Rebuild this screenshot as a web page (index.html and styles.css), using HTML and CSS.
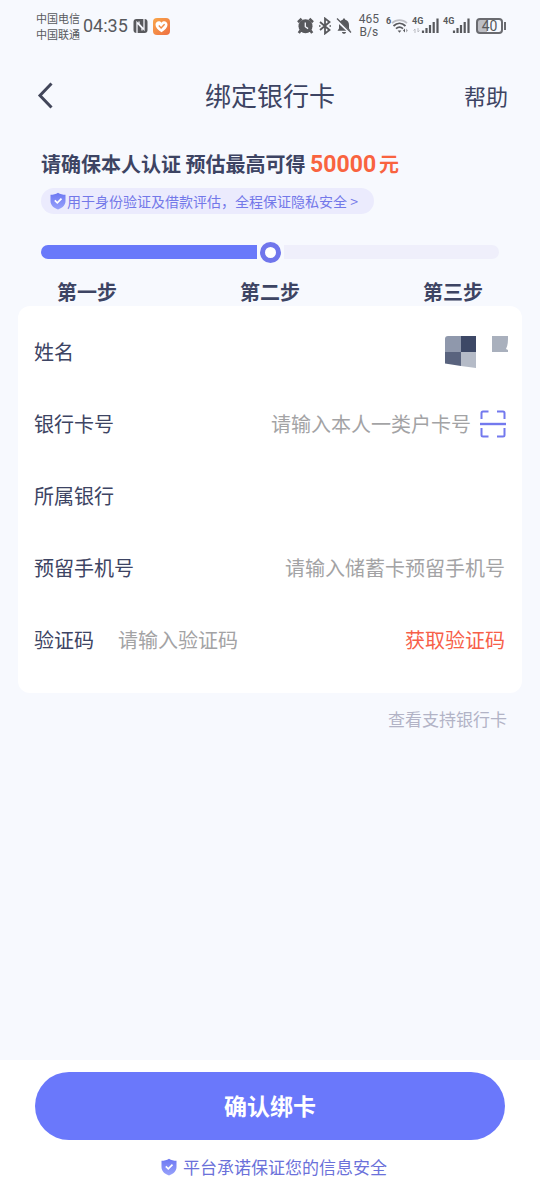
FILE: index.html
```html
<!DOCTYPE html>
<html lang="zh-CN">
<head>
<meta charset="utf-8">
<meta name="viewport" content="width=device-width, initial-scale=1">
<title>绑定银行卡</title>
<link rel="stylesheet" href="styles.css">
</head>
<body>
<div class="page">
  <div class="status">
    <div class="status-left">
      <div class="carriers"><span>中国电信</span><span>中国联通</span></div>
      <span class="clock">04:35</span>
      <svg class="nfc" width="15" height="16" viewBox="0 0 15 16" aria-hidden="true">
        <rect x="0.500" y="1" width="14" height="14" rx="3" fill="#58595d"/>
        <path d="M4 15V4.500L9 10v2.500M11 1v10.500L6 6V3.500" fill="none" stroke="#f7f8fe" stroke-width="1.300"/>
      </svg>
      <svg width="17" height="17" viewBox="0 0 17 17" aria-hidden="true">
        <defs><linearGradient id="heart" x1="0" y1="0" x2="1" y2="1"><stop stop-color="#f9a64a"/><stop offset="1" stop-color="#ee6f42"/></linearGradient></defs>
        <rect width="17" height="17" rx="4" fill="url(#heart)"/>
        <path d="M8.500 14.200C5 12 2.500 9.600 2.500 6.800 2.500 3.300 6.500 2.200 8.500 4.700c2-2.500 6-1.400 6 2.100 0 2.800-2.500 5.200-6 7.400z" fill="#fff"/>
        <path d="M5.800 7.600l2.300 2.300 3.500-3.700" fill="none" stroke="#f28b45" stroke-width="1.400"/>
      </svg>
    </div>
    <div class="status-right">
      <svg width="17" height="18" viewBox="0 0 17 18" aria-hidden="true">
        <circle cx="8.500" cy="9.300" r="7" fill="#58595d"/>
        <path d="M1 5.200L4.600 1.800M16 5.200L12.400 1.800M3.500 13.500L1.800 16M13.500 13.500l1.700 2.500" stroke="#58595d" stroke-width="2.600"/>
        <path d="M8.300 5.500v4.200l2.800 1.900" fill="none" stroke="#f7f8fe" stroke-width="1.300"/>
      </svg>
      <svg width="14" height="18" viewBox="0 0 14 18" aria-hidden="true">
        <path d="M2 5l9.500 8L7 16.500v-15L11.500 5 2 13" fill="none" stroke="#58595d" stroke-width="1.800"/>
        <path d="M1 9h1.500M11.500 9H13" stroke="#58595d" stroke-width="1.500"/>
      </svg>
      <svg width="16" height="18" viewBox="0 0 16 18" aria-hidden="true">
        <path d="M8 1.500c.8 0 1.200.5 1.200 1.200C12 3.400 13 5.500 13 8v3.500l1.500 2.300H1.500L3 11.500V8c0-2.500 1-4.600 3.800-5.300C6.800 2 7.200 1.500 8 1.500zM6 15h4c0 1-.8 1.800-2 1.800S6 16 6 15z" fill="#58595d"/>
        <path d="M0 2.500l15 14" stroke="#f7f8fe" stroke-width="2.600"/>
        <path d="M1 1.500l14 14" stroke="#58595d" stroke-width="1.300"/>
      </svg>
      <div class="speed"><span>465</span><span>B/s</span></div>
      <div class="signal"><span class="tag">6</span>
        <svg width="17" height="18" viewBox="0 0 17 18" aria-hidden="true">
          <path d="M1 6.200c4.300-4 10.700-4 15 0" fill="none" stroke="#bfc0c6" stroke-width="1.700"/>
          <path d="M2.500 9c3.600-3.400 8.400-3.400 12 0M5 11.700c2.200-2 4.800-2 7 0" fill="none" stroke="#58595d" stroke-width="1.800"/>
          <path d="M6.600 13.500h3.800l-1.900 2.200zM14 11.500v4l-2-2z" fill="#58595d"/>
          <path d="M15 11.500v4l2-2z" fill="#aaabb0"/>
        </svg>
      </div>
      <div class="signal"><span class="tag">4G</span>
        <svg width="18" height="18" viewBox="0 0 18 18" aria-hidden="true">
          <path d="M2 13.500V16M5.500 11v5M9 8v8M12.700 5v11M16.500 1.500V16" stroke="#58595d" stroke-width="2.200"/>
        </svg>
        <svg class="arrows" width="7" height="5" viewBox="0 0 7 5" aria-hidden="true"><path d="M2 5V1L.5 2.500M5 0v4l1.500-1.500" fill="none" stroke="#b9bac0"/></svg>
      </div>
      <div class="signal"><span class="tag">4G</span>
        <svg width="18" height="18" viewBox="0 0 18 18" aria-hidden="true">
          <path d="M2 13.500V16M5.500 11v5M9 8v8M12.700 5v11M16.500 1.500V16" stroke="#58595d" stroke-width="2.200"/>
        </svg>
      </div>
      <div class="battery"><span>40</span></div>
    </div>
  </div>

  <header class="header">
    <button class="back" type="button" aria-label="返回">
      <svg width="18" height="28" viewBox="0 0 18 28" aria-hidden="true"><path d="M15.500 2.500L4 14.500l11.500 12" fill="none" stroke="#42465a" stroke-width="3"/></svg>
    </button>
    <h1 class="title">绑定银行卡</h1>
    <button class="help" type="button">帮助</button>
  </header>

  <main class="main">
    <section class="intro">
      <h2 class="headline">请确保本人认证 预估最高可得 <span class="amount">50000</span><span class="unit">元</span></h2>
      <button class="notice" type="button">
        <svg width="16" height="18" viewBox="0 0 16 18" aria-hidden="true">
          <defs><linearGradient id="shield" x1="0" y1="0" x2="0" y2="1"><stop stop-color="#6c77f2"/><stop offset="1" stop-color="#98a2fb"/></linearGradient></defs>
          <path d="M8 .7c2.300 1.500 4.700 2 7.500 2.100V9c0 4.200-3 6.800-7.500 8.500C3.500 15.800.5 13.200.5 9V2.800C3.300 2.700 5.700 2.200 8 .7z" fill="url(#shield)"/>
          <path d="M4.800 8.400l2.500 2.400 4.200-4.200" fill="none" stroke="#fff" stroke-width="1.700"/>
        </svg>
        <span>用于身份验证及借款评估，全程保证隐私安全 &gt;</span>
      </button>
      <div class="track" role="progressbar" aria-label="绑卡进度" aria-valuemin="1" aria-valuemax="3" aria-valuenow="2">
        <div class="fill"></div><div class="knob"></div><div class="rest"></div>
      </div>
      <ol class="steps"><li>第一步</li><li>第二步</li><li>第三步</li></ol>
    </section>

    <form class="card" id="bind-form">
      <div class="row">
        <span class="label">姓名</span>
        <svg class="name" width="64" height="32" viewBox="0 0 64 32" role="img" aria-label="已隐藏的姓名">
          <path d="M0 3Q0 0 3 0H16V16H0z" fill="#8f98ac"/><path d="M16 0h15v16H16z" fill="#3d4866"/>
          <path d="M0 16h16v14L0 27.500z" fill="#59637e"/><path d="M16 16h15v16L16 30z" fill="#b5bbc7"/>
          <path d="M47 0h16c0 5 0 9-2 13l2 1v2H47z" fill="#a9b0bd"/>
        </svg>
      </div>
      <div class="row">
        <label class="label" for="card-no">银行卡号</label>
        <input class="field" id="card-no" type="text" inputmode="numeric" placeholder="请输入本人一类户卡号">
        <button class="scan" type="button" aria-label="扫描银行卡">
          <svg width="26" height="28" viewBox="0 0 26 28" aria-hidden="true">
            <path d="M1.500 9V3Q1.500 1.500 3 1.500H8.500M17 1.500h6Q24.500 1.500 24.500 3v6M24.500 18v7Q24.500 26.500 23 26.500H17M8.500 26.500H3Q1.500 26.500 1.500 25v-7" fill="none" stroke="#7379ee" stroke-width="2"/>
            <path d="M0 14h26" stroke="#7379ee" stroke-width="2.400"/>
          </svg>
        </button>
      </div>
      <div class="row">
        <label class="label" for="bank">所属银行</label>
        <input class="field" id="bank" type="text" readonly>
      </div>
      <div class="row">
        <label class="label" for="phone">预留手机号</label>
        <input class="field" id="phone" type="tel" placeholder="请输入储蓄卡预留手机号">
      </div>
      <div class="row">
        <label class="label" for="code">验证码</label>
        <input class="field code" id="code" type="text" inputmode="numeric" placeholder="请输入验证码">
        <button class="get-code" type="button">获取验证码</button>
      </div>
    </form>
    <a class="supported" href="#">查看支持银行卡</a>
  </main>

  <footer class="footer">
    <button class="submit" type="submit" form="bind-form">确认绑卡</button>
    <p class="promise">
      <svg width="16" height="18" viewBox="0 0 16 18" aria-hidden="true">
        <path d="M8 .7c2.300 1.500 4.700 2 7.500 2.100V9c0 4.200-3 6.800-7.500 8.500C3.500 15.800.5 13.200.5 9V2.800C3.300 2.700 5.700 2.200 8 .7z" fill="url(#shield)"/>
        <path d="M4.800 8.400l2.500 2.400 4.200-4.200" fill="none" stroke="#fff" stroke-width="1.700"/>
      </svg>
      <span>平台承诺保证您的信息安全</span>
    </p>
  </footer>
</div>
</body>
</html>
```
FILE: styles.css
```css
* { box-sizing: border-box; }

body {
  margin: 0;
  background: #f7f9fe;
  color: #3d4463;
  font-family: "Noto Sans CJK SC", sans-serif;
}

button, input {
  margin: 0;
  padding: 0;
  border: 0;
  background: none;
  color: inherit;
  font: inherit;
}

button { cursor: pointer; }
svg { display: block; flex: none; }

.page {
  display: flex;
  flex-direction: column;
  min-height: 100vh;
}

.status {
  display: flex;
  align-items: center;
  justify-content: space-between;
  height: 52px;
  padding: 0 34px 0 36px;
  color: #58595d;
}

.status-left, .status-right { display: flex; align-items: center; }
.status-left { gap: 5px; }
.status-right { gap: 4px; }

.carriers, .speed {
  display: flex;
  flex-direction: column;
  font-size: 11px;
  line-height: 16px;
}

.clock {
  margin-left: -2px;
  font: 18px/24px Roboto, sans-serif;
}

.speed {
  align-items: center;
  margin: 0 3px;
  font: 12px/13px Roboto, sans-serif;
}

.signal { position: relative; display: flex; padding-left: 5px; }
.signal + .signal { padding-left: 9px; }

.tag {
  position: absolute;
  top: 0;
  left: 0;
  font: bold 9px/9px Roboto, sans-serif;
}

.arrows { position: absolute; left: 1px; bottom: 2px; }

.battery {
  position: relative;
  width: 27px;
  height: 16px;
  margin: 0 3px 0 2px;
  border: 2px solid #6a6b70;
  border-radius: 4px;
  background: linear-gradient(90deg, #bdbec4 40%, transparent 40%);
  font: 14px/12px Roboto, sans-serif;
  text-align: center;
}

.battery::after {
  content: "";
  position: absolute;
  top: 2px;
  right: -5px;
  width: 2px;
  height: 8px;
  background: #6a6b70;
}

.header {
  display: grid;
  grid-template-columns: 1fr auto 1fr;
  align-items: center;
  height: 86px;
  padding: 0 32px;
}

.back { justify-self: start; padding-left: 4px; }
.title { margin: 0; font-size: 26px; font-weight: 400; line-height: 40px; }
.help { justify-self: end; font-size: 22px; line-height: 32px; }

.main { display: flex; flex: 1; flex-direction: column; }

.intro {
  display: flex;
  flex-direction: column;
  align-items: flex-start;
  padding: 11px 41px 0;
}

.headline { margin: 0; font-size: 20px; font-weight: 700; line-height: 30px; }
.amount, .unit { color: #f9633f; }
.amount { margin-right: 3px; font-family: Roboto, sans-serif; font-size: 23px; }

.notice {
  display: flex;
  align-items: center;
  gap: 1px;
  margin-top: 8px;
  padding: 0 16px 0 9px;
  border-radius: 13px;
  background: #ebebfd;
  color: #7378e9;
  font-size: 14px;
  line-height: 26px;
}

.track {
  display: flex;
  align-items: center;
  align-self: stretch;
  gap: 3px;
  height: 22px;
  margin-top: 27px;
}

.fill, .rest { flex: 1; height: 14px; }
.fill { border-radius: 7px 0 0 7px; background: #6979fa; }
.rest { border-radius: 0 7px 7px 0; background: #efeffb; }

.knob {
  width: 21px;
  height: 21px;
  border: 5px solid #7076ec;
  border-radius: 50%;
  background: #fff;
}

.steps {
  display: flex;
  align-self: stretch;
  justify-content: space-between;
  margin: 15px 0 0;
  padding: 0 16px;
  list-style: none;
  font-size: 20px;
  font-weight: 700;
  line-height: 28px;
}

.card {
  margin: 0 18px;
  padding: 10px 16px 17px;
  border-radius: 12px;
  background: #fff;
}

.row { display: flex; align-items: center; height: 72px; font-size: 20px; line-height: 30px; }
.label { flex: none; }
.name { margin-left: auto; margin-right: -3px; }

.field {
  flex: 1;
  min-width: 0;
  margin-right: 1px;
  text-align: right;
  outline: none;
}

.field::placeholder { color: #a3a3a5; opacity: 1; }
.code { margin-left: 24px; text-align: left; }
.scan { margin-left: 8px; }
.get-code { margin-right: 1px; color: #f75f49; }

.supported {
  align-self: flex-end;
  margin: 13px 33px 0;
  color: #b2b3c6;
  font-size: 17px;
  line-height: 26px;
  text-decoration: none;
}

.footer { padding: 12px 35px 20px; background: #fff; }

.submit {
  display: block;
  width: 100%;
  height: 68px;
  padding-bottom: 2px;
  border-radius: 34px;
  background: #6a78fb;
  color: #fff;
  font-size: 23px;
  font-weight: 700;
}

.promise {
  display: flex;
  align-items: center;
  justify-content: center;
  gap: 6px;
  margin: 14px 0 0;
  padding-left: 8px;
  color: #6b71da;
  font-size: 17px;
  line-height: 26px;
}
```
